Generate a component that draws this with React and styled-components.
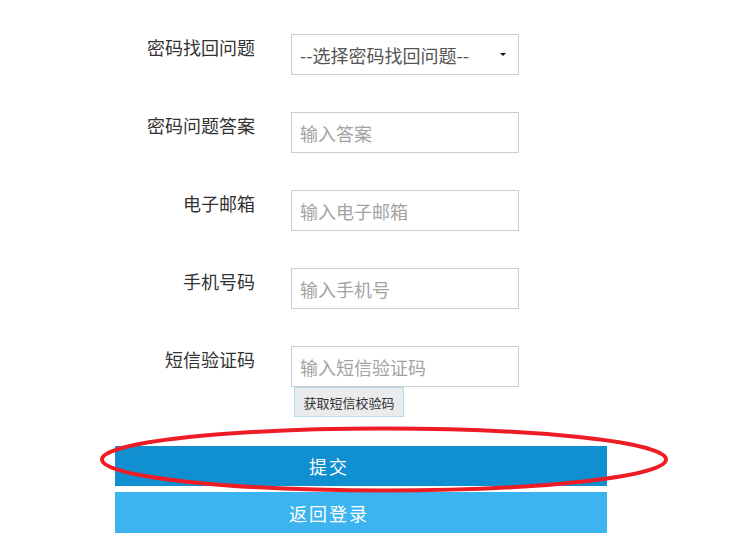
import React from "react";
import styled, { createGlobalStyle } from "styled-components";

const Global = createGlobalStyle`
  html, body { margin: 0; padding: 0; background: #fff; }
  body { font-family: "Noto Sans CJK SC", "Noto Sans", sans-serif; color: #333; }
`;

const Page = styled.div`
  position: relative;
  width: 755px;
  height: 557px;
  padding-top: 34px;
  box-sizing: border-box;
`;

const Form = styled.form`
  margin-left: 115px;
  width: 492px;
  display: flex;
  flex-direction: column;
`;

const Row = styled.div`
  display: flex;
  align-items: flex-start;
  gap: 36px;
  margin-bottom: ${(p) => p.$mb ?? 37}px;
`;

const Label = styled.label`
  width: 140px;
  flex: none;
  text-align: right;
  font-size: 18px;
  line-height: 26px;
  padding-top: 0;
  color: #333;
`;

const Field = styled.div`
  display: flex;
  flex-direction: column;
  align-items: flex-start;
`;

const Input = styled.input`
  width: 228px;
  height: 41px;
  box-sizing: border-box;
  border: 1px solid #ccc;
  padding: 0 8px;
  font-family: inherit;
  font-size: 18px;
  color: #555;
  outline: none;
  &::placeholder { color: #a3a3a3; }
`;

const SelectWrap = styled.div`
  position: relative;
  width: 228px;
  height: 41px;
  &::after {
    content: "";
    position: absolute;
    right: 13px;
    top: 19px;
    border-left: 3px solid transparent;
    border-right: 3px solid transparent;
    border-top: 3px solid #111;
    pointer-events: none;
  }
`;

const Select = styled.select`
  appearance: none;
  -webkit-appearance: none;
  width: 100%;
  height: 100%;
  box-sizing: border-box;
  border: 1px solid #ccc;
  border-radius: 0;
  background: #fff;
  padding: 0 8px;
  font-family: inherit;
  font-size: 18px;
  color: #555;
  outline: none;
`;

const SmsButton = styled.button`
  margin-left: 3px;
  width: 110px;
  height: 30px;
  box-sizing: border-box;
  border: 1px solid #b3dced;
  background: #eaebed;
  color: #333;
  font-family: inherit;
  font-size: 13px;
  padding: 0;
  cursor: pointer;
`;

const Action = styled.button`
  width: 492px;
  height: ${(p) => p.$h}px;
  margin-bottom: ${(p) => p.$mb}px;
  border: none;
  background: ${(p) => p.$bg};
  color: #fff;
  font-family: inherit;
  font-size: 18px;
  letter-spacing: 2px;
  padding: 0 64px 0 0;
  cursor: pointer;
`;

const Annotation = styled.svg`
  position: absolute;
  left: 0;
  top: 0;
  pointer-events: none;
`;

export default function App() {
  return (
    <Page>
      <Global />
      <Form onSubmit={(e) => e.preventDefault()}>
        <Row>
          <Label>密码找回问题</Label>
          <SelectWrap>
            <Select defaultValue="">
              <option value="">--选择密码找回问题--</option>
            </Select>
          </SelectWrap>
        </Row>
        <Row>
          <Label>密码问题答案</Label>
          <Input placeholder="输入答案" />
        </Row>
        <Row>
          <Label>电子邮箱</Label>
          <Input placeholder="输入电子邮箱" />
        </Row>
        <Row>
          <Label>手机号码</Label>
          <Input placeholder="输入手机号" />
        </Row>
        <Row $mb={29}>
          <Label>短信验证码</Label>
          <Field>
            <Input placeholder="输入短信验证码" />
            <SmsButton type="button">获取短信校验码</SmsButton>
          </Field>
        </Row>
        <Action type="submit" $bg="#108fd1" $h={40} $mb={6}>提交</Action>
        <Action type="button" $bg="#3bb4f0" $h={41} $mb={0}>返回登录</Action>
      </Form>
      <Annotation width="755" height="557" viewBox="0 0 755 557">
        <ellipse cx="384" cy="459.5" rx="282" ry="31" fill="none" stroke="#ee1c25" strokeWidth="4" />
      </Annotation>
    </Page>
  );
}
